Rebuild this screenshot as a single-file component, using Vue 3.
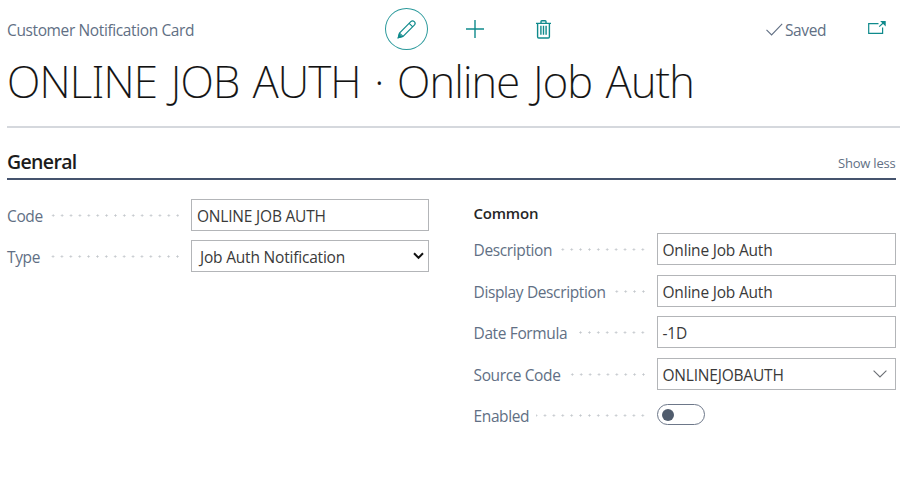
<script setup>
const general = [
  { label: 'Code', value: 'ONLINE JOB AUTH', kind: 'text' },
  { label: 'Type', value: 'Job Auth Notification', kind: 'select' },
]
const common = [
  { label: 'Description', value: 'Online Job Auth', kind: 'text' },
  { label: 'Display Description', value: 'Online Job Auth', kind: 'text' },
  { label: 'Date Formula', value: '-1D', kind: 'text' },
  { label: 'Source Code', value: 'ONLINEJOBAUTH', kind: 'lookup' },
  { label: 'Enabled', kind: 'toggle' },
]
const groups = [
  { name: 'main', fields: general },
  { name: 'common', title: 'Common', fields: common },
]
</script>

<template>
  <main class="card">
    <header class="topbar">
      <span class="caption">Customer Notification Card</span>
      <nav class="actions">
        <span class="edit">
          <svg width="20" height="20" viewBox="0 0 20 20" fill="none" stroke="currentColor" stroke-width="1.15">
            <path d="M1.3 18.6 2.5 14.1 13.8 2.7a2.3 2.3 0 0 1 3.5 3.5L6 17.4Z M2.5 14.1 6 17.4 M12.2 4.3l3.5 3.5" />
            <path d="M1.3 18.6l.8-3 2.3 2.2Z" fill="currentColor" />
          </svg>
        </span>
        <svg class="plus" width="18" height="18" viewBox="0 0 18 18" fill="none" stroke="currentColor" stroke-width="1.4">
          <path d="M9 0v18M0 9h18" />
        </svg>
        <svg class="trash" width="15" height="19" viewBox="0 0 15 19" fill="none" stroke="currentColor" stroke-width="1.4">
          <path d="M0 3.4h15M5 3V1.6Q5 .8 5.8.8h3.4q.8 0 .8.8V3M1.6 3.4v13.4q0 1.2 1.2 1.2h9.4q1.2 0 1.2-1.2V3.4" />
          <path d="M4.9 5.8v9M7.5 5.8v9M10.1 5.8v9" />
        </svg>
      </nav>
      <div class="status">
        <svg width="17" height="13" viewBox="0 0 17 13" fill="none" stroke="currentColor" stroke-width="1.1">
          <path d="M.5 6.8 5.6 11.9 16.2.9" />
        </svg>
        <span>Saved</span>
      </div>
      <svg class="popout" width="18" height="14" viewBox="0 0 18 14" fill="none" stroke="currentColor" stroke-width="1.2">
        <path d="M10.5 2.6H.7v9.8h13.9V6.5M11.2 5.6l4-3.6" />
        <path d="M13.6.6h3.5v3.5Z" fill="currentColor" />
      </svg>
    </header>

    <h1>ONLINE JOB AUTH · <span>Online Job Auth</span></h1>
    <div class="rule"></div>

    <section class="fasttab">
      <div class="heading">
        <h2>General</h2>
        <span class="less">Show less</span>
      </div>
      <div class="columns">
        <div v-for="g in groups" :key="g.name" class="column" :class="g.name">
          <h3 v-if="g.title">{{ g.title }}</h3>
          <div v-for="f in g.fields" :key="f.label" class="field">
            <span class="label">{{ f.label }}</span>
            <span class="dots"></span>
            <div v-if="f.kind === 'toggle'" class="toggle-cell">
              <span class="toggle"><i></i></span>
            </div>
            <div v-else class="input" :class="f.kind">
              <span>{{ f.value }}</span>
              <svg v-if="f.kind === 'select'" width="11" height="8" viewBox="0 0 11 8" fill="none" stroke="#111" stroke-width="2">
                <path d="M1 1.3 5.5 5.8 10 1.3" />
              </svg>
              <svg v-if="f.kind === 'lookup'" width="14" height="8" viewBox="0 0 14 8" fill="none" stroke="#6b6f75" stroke-width="1.1">
                <path d="M.6.6 7 7 13.4.6" />
              </svg>
            </div>
          </div>
        </div>
      </div>
    </section>
  </main>
</template>

<style>
body { background: #fff; }
</style>

<style scoped>
.card {
  box-sizing: border-box;
  height: 489px;
  padding-left: 7px;
  overflow: hidden;
  font-family: "Open Sans", "Noto Sans", sans-serif;
  font-size: 15.5px;
  color: #3a3a3a;
}
h1, h2, h3 { margin: 0; }
.topbar {
  display: flex;
  align-items: center;
  height: 58px;
  color: #0f8a8c;
}
.caption {
  width: 378px;
  padding-top: 2px;
  color: #616f84;
  letter-spacing: -0.38px;
  white-space: nowrap;
}
.actions { display: flex; align-items: center; width: 381px; }
.edit {
  box-sizing: border-box;
  display: flex;
  align-items: center;
  justify-content: center;
  width: 43px;
  height: 42px;
  border: 1px solid #2a999b;
  border-radius: 50%;
}
.plus { margin-left: 38px; }
.trash { margin-left: 52px; }
.status {
  display: flex;
  align-items: center;
  width: 102px;
  gap: 2px;
  color: #616f84;
  letter-spacing: -0.4px;
}
.status span { padding-top: 2px; }
.popout { margin-top: -2px; }
h1 {
  height: 68px;
  font: 200 43.8px/46px "Noto Sans", "Open Sans", sans-serif;
  letter-spacing: -0.78px;
  word-spacing: 2.9px;
  color: #111;
  white-space: nowrap;
  -webkit-text-stroke: 0.2px #111;
}
.rule { height: 2px; background: #d5d8dd; }
.fasttab { margin-right: 4.5px; }
.heading {
  box-sizing: border-box;
  display: flex;
  align-items: flex-end;
  justify-content: space-between;
  height: 52px;
  border-bottom: 2px solid #45536d;
}
h2 {
  font-size: 19.5px;
  font-weight: 600;
  line-height: 32px;
  letter-spacing: -0.65px;
  color: #1c1c1c;
}
.less {
  font-size: 13px;
  line-height: 29px;
  letter-spacing: -0.2px;
  color: #616f84;
}
.columns {
  display: grid;
  grid-template-columns: 422px 422px;
  gap: 44.5px;
  padding-top: 19px;
}
.column { display: flex; flex-direction: column; gap: 9.4px; }
h3 {
  font-size: 15px;
  font-weight: 600;
  line-height: 24px;
  letter-spacing: -0.2px;
  color: #262626;
  padding-top: 2px;
  margin-bottom: -1px;
}
.field { display: flex; align-items: center; height: 32px; }
.label {
  padding-top: 2px;
  color: #616f84;
  letter-spacing: -0.37px;
  white-space: nowrap;
}
.dots {
  flex: 1;
  height: 3px;
  margin: 1px 12px 0 7px;
  background: radial-gradient(circle at 7.4px 1.5px, #c3c7cc 0.8px, transparent 1.4px) right center / 8.9px 3px round;
  background-repeat: repeat-x;
}
.input {
  box-sizing: border-box;
  display: flex;
  align-items: center;
  justify-content: space-between;
  width: 238px;
  height: 32px;
  padding: 0 8px 0 5px;
  border: 1px solid #b3b5b8;
  letter-spacing: -0.2px;
}
.input span { padding-top: 2px; }
.common .input, .common .toggle-cell { width: 239px; }
.select { padding: 0 4px 0 8px; }
.toggle-cell { width: 238px; }
.toggle {
  box-sizing: border-box;
  display: flex;
  align-items: center;
  width: 48px;
  height: 21px;
  padding-left: 4px;
  border: 1px solid #6d7789;
  border-radius: 11px;
}
.toggle i { width: 12px; height: 12px; border-radius: 50%; background: #505c6d; }
</style>
